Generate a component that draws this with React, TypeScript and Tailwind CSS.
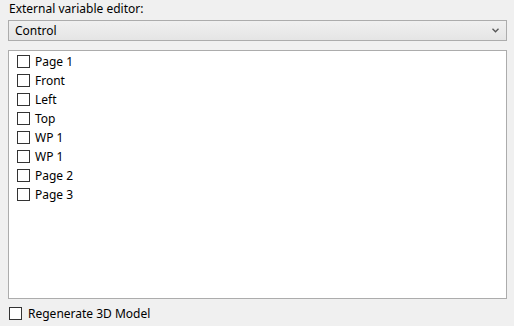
import React from "react";

const items = ["Page 1", "Front", "Left", "Top", "WP 1", "WP 1", "Page 2", "Page 3"];

const Box = () => (
  <span className="block w-[13px] h-[13px] border border-[#333333] bg-white shrink-0" />
);

export default function App() {
  return (
    <div
      className="w-[514px] h-[326px] bg-[#f0f0f0] text-[12px] text-black overflow-hidden"
      style={{ fontFamily: '"Noto Sans", "Open Sans", sans-serif' }}
    >
      <div className="pl-[9px] pt-[1px] h-[20px] leading-[16px]">External variable editor:</div>

      {/* dropdown */}
      <div className="ml-[8px] w-[499px] h-[21px] border border-[#acacac] bg-gradient-to-b from-[#f0f0f0] to-[#e5e5e5] flex items-center justify-between pl-[6px] pr-[7px]">
        <span className="leading-[16px]">Control</span>
        <svg width="7" height="5" viewBox="0 0 7 5" className="text-[#555555]">
          <path d="M0.5 0.8 L3.5 3.8 L6.5 0.8" fill="none" stroke="currentColor" strokeWidth="1.3" />
        </svg>
      </div>

      {/* list */}
      <div className="ml-[8px] mt-[9px] w-[499px] h-[249px] border border-[#acacac] bg-white pt-[1px] pl-[8px]">
        {items.map((label, i) => (
          <div key={i} className="flex items-center h-[19px] gap-[5px]">
            <Box />
            <span className="leading-[16px]">{label}</span>
          </div>
        ))}
      </div>

      <div className="flex items-center gap-[6px] pl-[9px] mt-[7px] h-[15px]">
        <Box />
        <span className="leading-[16px]">Regenerate 3D Model</span>
      </div>
    </div>
  );
}
